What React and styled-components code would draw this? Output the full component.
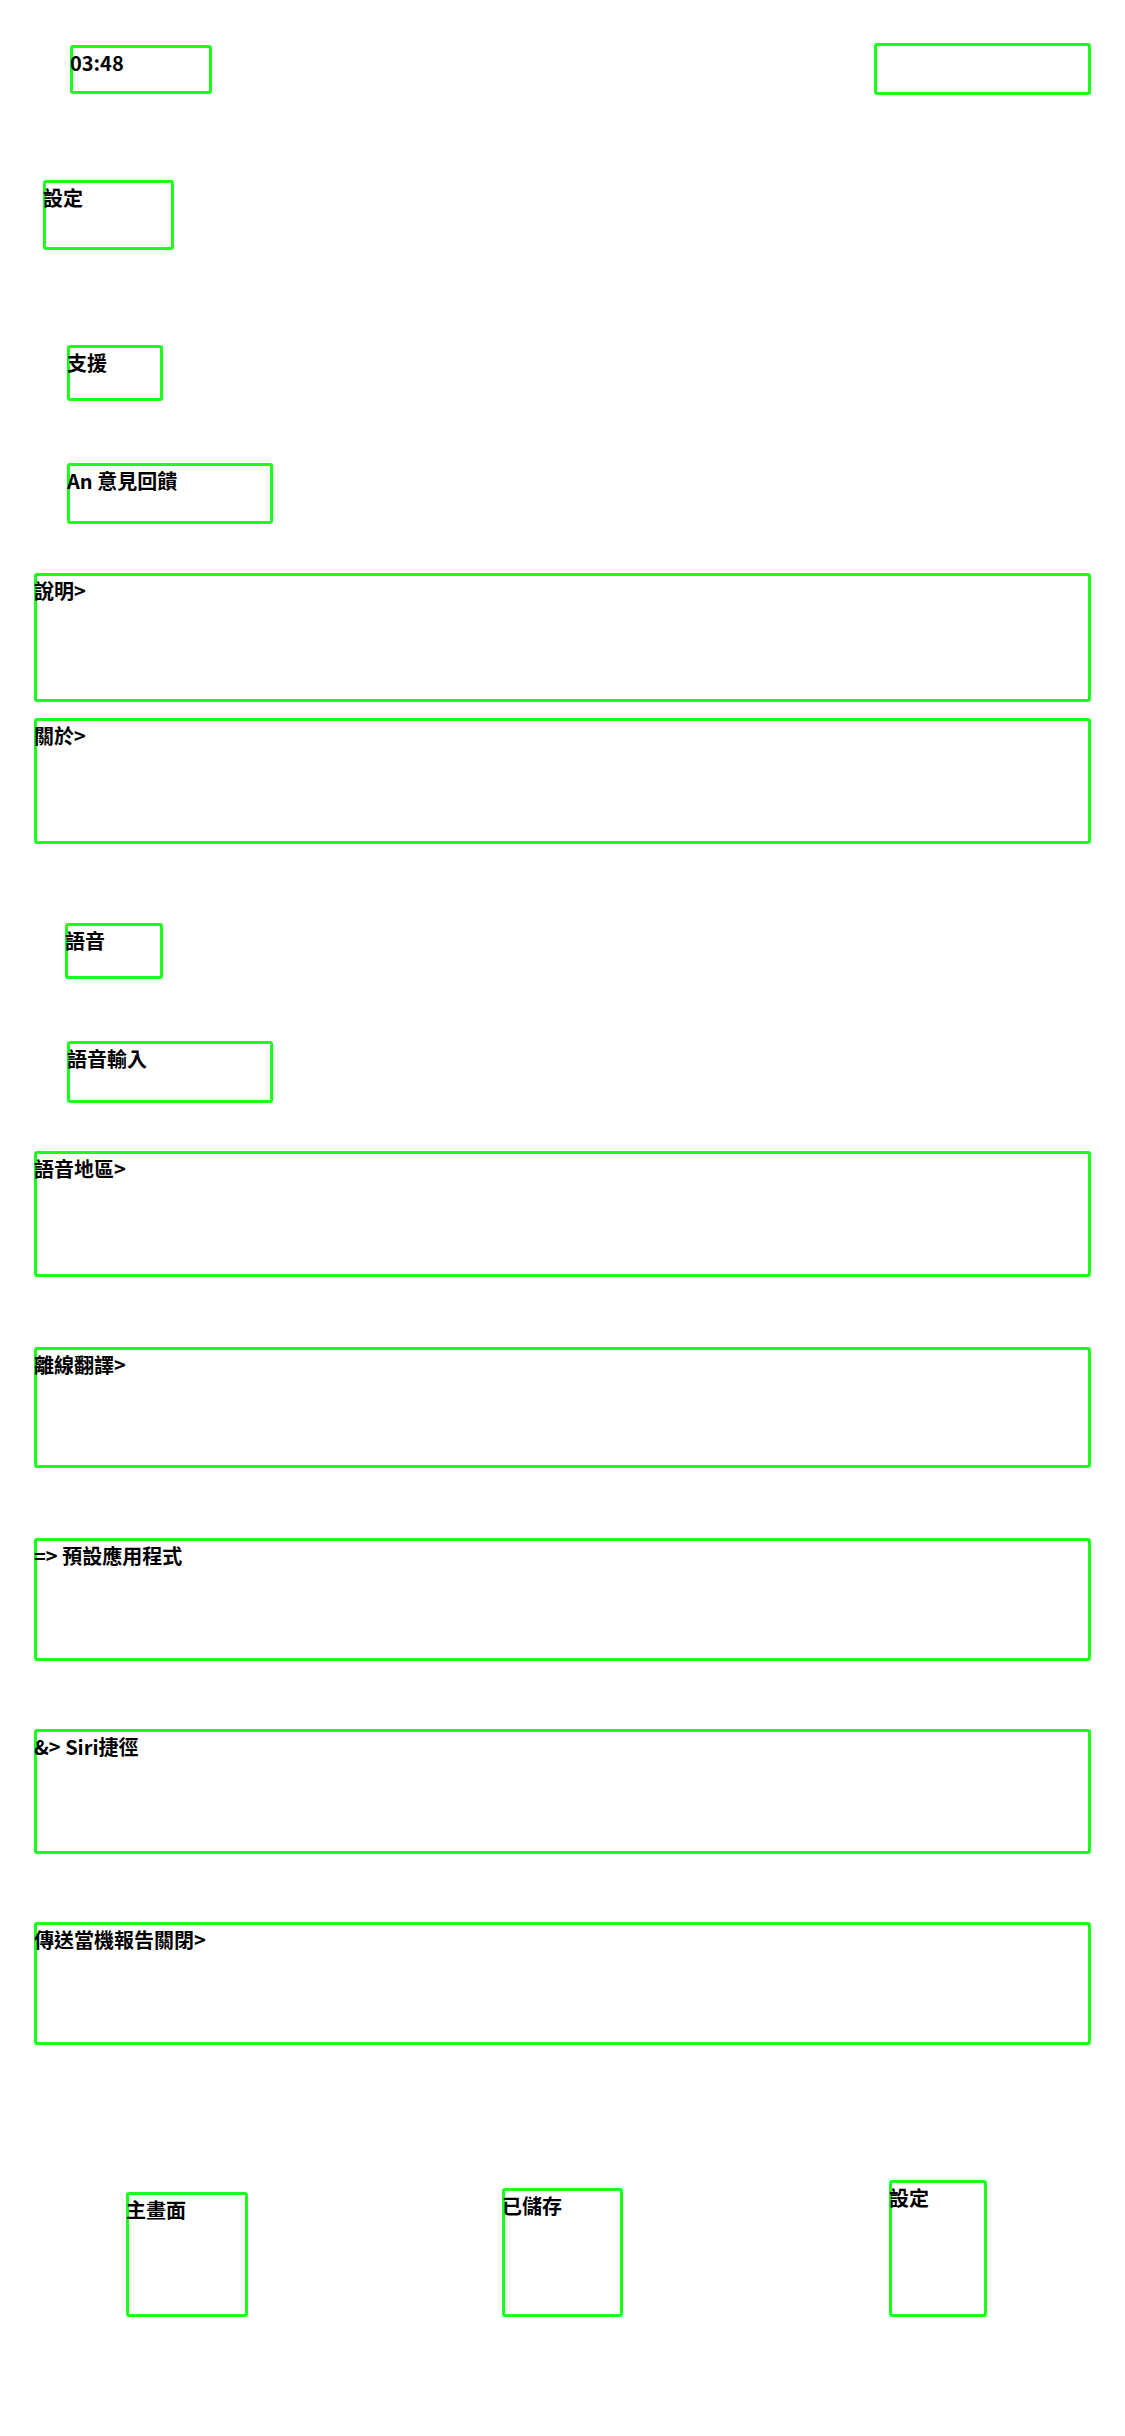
import React from 'react'
import styled, { createGlobalStyle } from 'styled-components'

const GlobalStyle = createGlobalStyle`
  html, body {
    margin: 0;
    padding: 0;
    background: #ffffff;
  }
  body {
    font-family: "Noto Sans CJK TC", "Noto Sans", sans-serif;
  }
`

const green = '#1cff1c'

const Page = styled.div`
  width: 1125px;
  min-height: 2436px;
  display: flex;
  flex-direction: column;
  background: #ffffff;
`

// text sits flush with the outer edge of the frame, over the left border
const Box = styled.div`
  box-sizing: border-box;
  border: 3px solid ${green};
  border-radius: 3px;
  color: #000;
  font-weight: 700;
  font-size: 20px;
  line-height: normal;
  white-space: nowrap;
  text-indent: -3px;
`

const StatusBar = styled.div`
  display: flex;
  justify-content: space-between;
  align-items: flex-start;
  padding: 43px 34px 0 70px;
`

const Time = styled(Box)`
  margin-top: 2px;
  width: 142px;
  height: 49px;
`

const StatusIcons = styled(Box)`
  width: 217px;
  height: 52px;
`

const Title = styled(Box)`
  align-self: flex-start;
  margin: 85px 0 0 43px;
  width: 131px;
  height: 70px;
`

const SectionHeader = styled(Box)`
  align-self: flex-start;
  margin-top: ${p => p.$top}px;
  margin-left: ${p => p.$left}px;
  width: ${p => p.$w}px;
  height: 56px;
`

const Item = styled(Box)`
  align-self: flex-start;
  margin-top: 62px;
  margin-left: 67px;
  width: 206px;
  height: ${p => p.$h}px;
`

const Row = styled(Box)`
  margin: ${p => p.$top}px 34px 0 34px;
  height: ${p => p.$h}px;
`

const TabBar = styled.div`
  display: flex;
  align-items: flex-end;
  margin-top: 135px;
`

const Tab = styled(Box)`
  margin-left: ${p => p.$left}px;
  width: ${p => p.$w}px;
  height: ${p => p.$h}px;
`

const supportRows = [
  { label: '說明>', top: 49, h: 129 },
  { label: '關於>', top: 16, h: 126 },
]

const voiceRows = [
  { label: '語音地區>', top: 48, h: 126 },
  { label: '離線翻譯>', top: 70, h: 121 },
  { label: '=> 預設應用程式', top: 70, h: 123 },
  { label: '&> Siri捷徑', top: 68, h: 125 },
  { label: '傳送當機報告關閉>', top: 68, h: 123 },
]

const tabs = [
  { label: '主畫面', left: 126, w: 122, h: 125 },
  { label: '已儲存', left: 254, w: 121, h: 129 },
  { label: '設定', left: 266, w: 98, h: 137 },
]

export default function App() {
  return (
    <>
      <GlobalStyle />
      <Page>
        <StatusBar>
          <Time>03:48</Time>
          <StatusIcons />
        </StatusBar>

        <Title>設定</Title>

        <SectionHeader $top={95} $left={67} $w={96}>支援</SectionHeader>
        <Item $h={61}>An 意見回饋</Item>
        {supportRows.map(r => (
          <Row key={r.label} $top={r.top} $h={r.h}>{r.label}</Row>
        ))}

        <SectionHeader $top={79} $left={65} $w={98}>語音</SectionHeader>
        <Item $h={62}>語音輸入</Item>
        {voiceRows.map(r => (
          <Row key={r.label} $top={r.top} $h={r.h}>{r.label}</Row>
        ))}

        <TabBar>
          {tabs.map(t => (
            <Tab key={t.label} $left={t.left} $w={t.w} $h={t.h}>{t.label}</Tab>
          ))}
        </TabBar>
      </Page>
    </>
  )
}
